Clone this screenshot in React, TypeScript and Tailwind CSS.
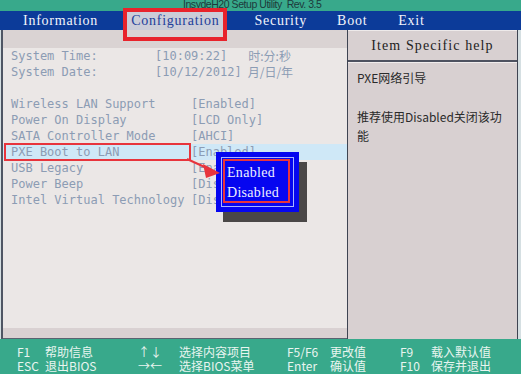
import React from 'react'

const mono = { fontFamily: '"DejaVu Sans Mono", "Noto Sans CJK SC", monospace' }
const serif = { fontFamily: '"Liberation Serif", "Noto Sans CJK SC", serif' }
const cjk = { fontFamily: '"Noto Sans CJK SC", "Noto Sans", sans-serif' }

const menuItems = [
  { label: 'Information', ml: 'ml-[23px]' },
  { label: 'Configuration', ml: 'ml-[28px] px-[5px]', active: true },
  { label: 'Security', ml: 'ml-[30px]' },
  { label: 'Boot', ml: 'ml-[30px]' },
  { label: 'Exit', ml: 'ml-[31px]' },
]

const settings = [
  { label: 'Wireless LAN Support', value: '[Enabled]' },
  { label: 'Power On Display', value: '[LCD Only]' },
  { label: 'SATA Controller Mode', value: '[AHCI]' },
  { label: 'PXE Boot to LAN', value: '[Enabled]', selected: true },
  { label: 'USB Legacy', value: '[Enabled]' },
  { label: 'Power Beep', value: '[Disabled]' },
  { label: 'Intel Virtual Technology', value: '[Disabled]' },
]

const keys = [
  ['F1', '帮助信息', '↑↓', '选择内容项目', 'F5/F6', '更改值', 'F9', '载入默认值'],
  ['ESC', '退出BIOS', '→←', '选择BIOS菜单', 'Enter', '确认值', 'F10', '保存并退出'],
]

export default function App() {
  return (
    <div className="relative w-[521px] h-[374px] overflow-hidden bg-[#38a98b] flex flex-col">
      {/* title */}
      <div className="h-[11px] overflow-hidden flex">
        <span
          className="ml-[183px] -mt-[1px] text-[10.5px] leading-[11px] text-[#1d3a3c] tracking-[-0.45px] whitespace-pre"
          style={{ fontFamily: '"Liberation Sans", Arial, sans-serif' }}
        >
          InsydeH20 Setup Utility  Rev. 3.5
        </span>
      </div>

      {/* menu bar */}
      <div className="h-[19px] bg-[#0c3b99] flex items-stretch text-[14px] tracking-[0.75px]" style={serif}>
        {menuItems.map((m) => (
          <div
            key={m.label}
            className={`${m.ml} flex items-center ${m.active ? 'bg-[#cbcdd8] text-[#23409a]' : 'text-[#f2f4fb]'}`}
          >
            {m.label}
          </div>
        ))}
      </div>

      {/* main */}
      <div className="h-[309px] flex bg-[#d5dfe2] pl-[1px] pr-[3px]">
        {/* left panel */}
        <div className="w-[346px] border-l-2 border-[#4f5664] bg-[#ebe7e6] flex flex-col text-[12px] leading-[16px] text-[#8c9cb4]" style={mono}>
          <div className="h-[18px] bg-[#dad3d3]" />
          <div className="pl-[8px] flex">
            <span className="w-[144px]">System Time:</span>
            <span>[10:09:22]</span>
            <span className="ml-[21px]" style={cjk}>时:分:秒</span>
          </div>
          <div className="pl-[8px] flex">
            <span className="w-[144px]">System Date:</span>
            <span>[10/12/2012]</span>
            <span className="ml-[6px]" style={cjk}>月/日/年</span>
          </div>
          <div className="h-[16px]" />
          {settings.map((s) => (
            <div key={s.label} className={`pl-[6px] flex ${s.selected ? 'bg-[#cfe8f7]' : ''}`}>
              <span className="w-[182px] pl-[2px] whitespace-pre">{s.label}</span>
              <span>{s.value}</span>
            </div>
          ))}
          <div className="flex-1" />
          <div className="h-[11px] bg-[#d9d1d2] border-b border-[#5a6270]" />
        </div>

        {/* right panel */}
        <div className="flex-1 border-l border-r border-[#3e4452] bg-[#d8d0d1] flex flex-col">
          <div
            className="h-[32px] flex items-center justify-center text-[14px] tracking-[1.1px] text-[#222] border-b-2 border-[#4e5260] border-t border-t-[#eeeaea]"
            style={serif}
          >
            Item Specific help
          </div>
          <div className="pl-[9px] pt-[5px] text-[12px] leading-[19px] text-[#2a2a2a] border-t border-[#f1eded]" style={cjk}>
            <div>PXE网络引导</div>
            <div className="mt-[20px] pr-[8px]">推荐使用Disabled关闭该功能</div>
          </div>
          <div className="flex-1" />
        </div>
      </div>

      {/* key help */}
      <div className="flex-1 pl-[17px] pt-[6px] text-[12px] leading-[14px] text-[#e9f5f0]" style={cjk}>
        {keys.map((row, i) => (
          <div key={i} className="grid grid-cols-[28px_93px_41px_108px_43px_70px_31px_1fr]">
            {row.map((t, j) => (
              <span key={j} className="whitespace-nowrap">{t}</span>
            ))}
          </div>
        ))}
      </div>

      {/* popup shadow */}
      <div className="absolute left-[223px] top-[162px] w-[84px] h-[60px] bg-[#4a4747]" />
      {/* popup */}
      <div className="absolute left-[216px] top-[152px] w-[83px] h-[60px] bg-[#0606f0] p-[5px]">
        <div className="w-full h-full border border-[#a9b4ff] pt-[1px] pl-[1px]">
          <div className="w-[67px] h-[44px] border-2 border-[#e8343c] flex flex-col text-[14px] leading-[20px] tracking-[0.3px] text-[#eef0ff] pl-[2px] pt-[2px]" style={serif}>
            <span>Enabled</span>
            <span>Disabled</span>
          </div>
        </div>
      </div>

      {/* annotations */}
      <div className="absolute left-[123px] top-[8px] w-[104px] h-[33px] border-4 border-[#e8232b]" />
      <div className="absolute left-[4px] top-[143px] w-[187px] h-[18px] border-2 border-[#e8343c]" />
      <svg className="absolute left-[185px] top-[155px]" width="40" height="30" viewBox="0 0 40 30">
        <line x1="2" y1="4" x2="24" y2="14" stroke="#e8343c" strokeWidth="2" />
        <polygon points="35,18 18,9 21,23" fill="#e8343c" />
      </svg>
    </div>
  )
}
